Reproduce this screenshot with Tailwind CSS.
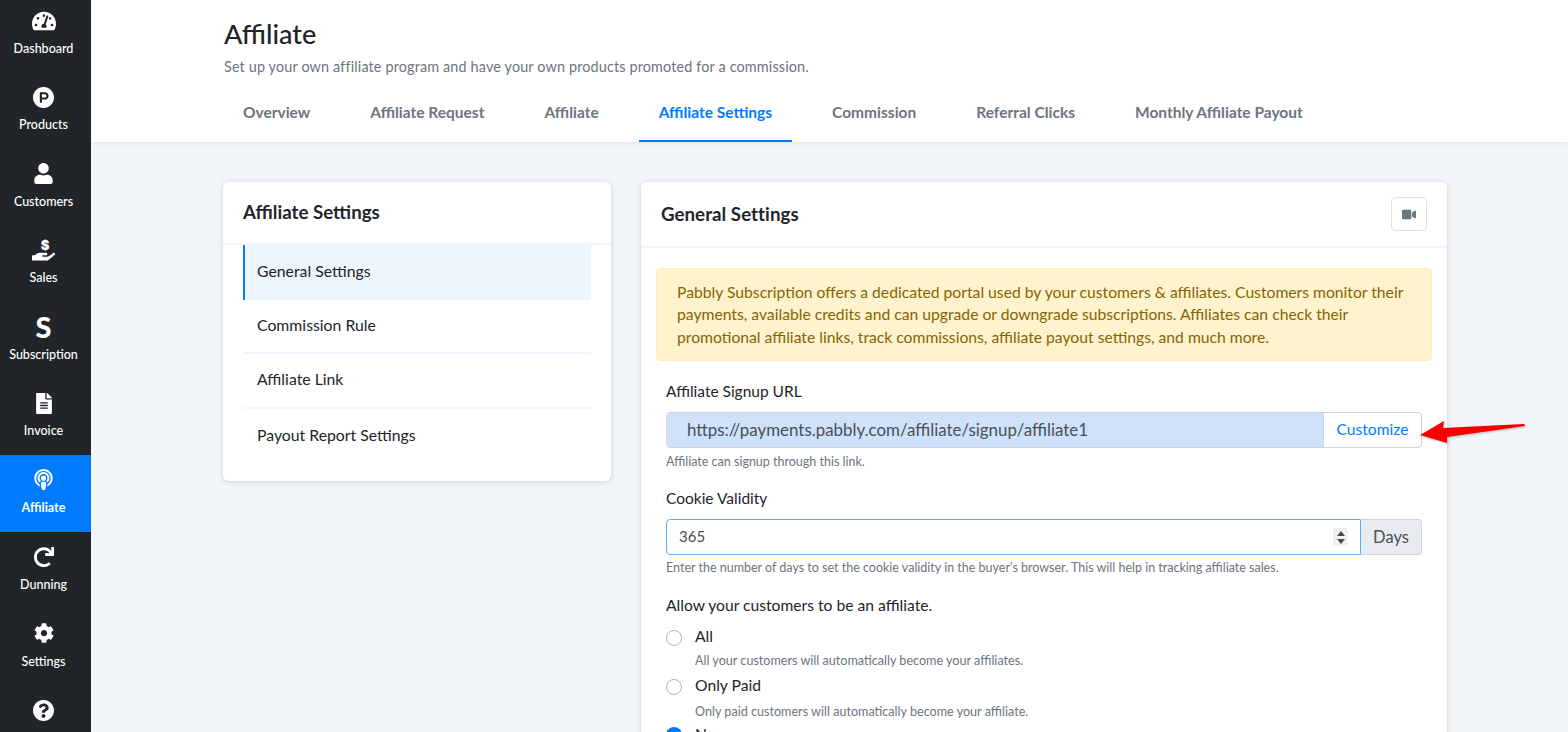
<!DOCTYPE html>
<html lang="en">
<head>
  <meta charset="UTF-8" />
  <meta name="viewport" content="width=device-width, initial-scale=1.0"/>
  <title>Affiliate Settings</title>
  <script src="https://cdn.jsdelivr.net/npm/@tailwindcss/browser@4"></script>
</head>
<body class="bg-[#f2f6f9] text-[#212529] font-['Lato','Open_Sans',sans-serif] h-[732px] w-[1568px] overflow-hidden">
<div class="flex h-[732px] relative overflow-hidden">

  <!-- Sidebar -->
  <aside class="w-[91px] shrink-0 bg-[#212529] text-white text-[12.5px] font-medium overflow-hidden">
    <div class="-mt-[5px] flex flex-col">
      <a class="h-[76.6px] flex flex-col items-center justify-end pb-[13px] pr-[4px] gap-[8px]">
        <svg class="w-[24px] h-[22px] fill-white" viewBox="0 32 576 448"><path d="M288 32C128.94 32 0 160.94 0 320c0 52.8 14.25 102.26 39.06 144.8 5.61 9.62 16.3 15.2 27.44 15.2h443c11.14 0 21.83-5.58 27.44-15.2C561.75 422.26 576 372.8 576 320c0-159.06-128.94-288-288-288zm0 64c14.71 0 26.58 10.13 30.32 23.65-1.11 2.26-2.64 4.23-3.45 6.67l-9.22 27.67c-5.13 3.49-10.97 6.01-17.64 6.01-17.67 0-32-14.33-32-32S270.33 96 288 96zM96 384c-17.67 0-32-14.33-32-32s14.33-32 32-32 32 14.33 32 32-14.33 32-32 32zm48-160c-17.67 0-32-14.33-32-32s14.33-32 32-32 32 14.33 32 32-14.33 32-32 32zm246.77-72.41l-61.33 184C343.13 347.33 352 364.54 352 384c0 11.72-3.38 22.55-8.88 32H232.88c-5.5-9.45-8.88-20.28-8.88-32 0-33.94 26.5-61.43 59.9-63.59l61.34-184.01c4.17-12.56 17.73-19.45 30.36-15.17 12.57 4.19 19.35 17.77 15.17 30.36zm14.66 57.2l15.52-46.55c3.47-1.29 7.13-2.23 11.05-2.23 17.67 0 32 14.33 32 32s-14.33 32-32 32c-11.38-.01-20.89-6.28-26.57-15.22zM480 384c-17.67 0-32-14.33-32-32s14.33-32 32-32 32 14.33 32 32-14.33 32-32 32z"/></svg>
        <span>Dashboard</span>
      </a>
      <a class="h-[76.6px] flex flex-col items-center justify-end pb-[13px] pr-[4px] gap-[8px]">
        <svg class="w-[21px] h-[21px] fill-white" viewBox="8 8 496 496"><path d="M326.3 218.8c0 20.5-16.7 37.2-37.2 37.2h-70.3v-74.4h70.3c20.5 0 37.2 16.7 37.2 37.2zM504 256c0 137-111 248-248 248S8 393 8 256 119 8 256 8s248 111 248 248zm-128.1-37.2c0-47.9-38.9-86.8-86.8-86.8H169.2v248h49.6v-74.4h70.3c47.9 0 86.8-38.9 86.8-86.8z"/></svg>
        <span>Products</span>
      </a>
      <a class="h-[76.6px] flex flex-col items-center justify-end pb-[13px] pr-[4px] gap-[9px]">
        <svg class="w-[19px] h-[21px] fill-white" viewBox="0 0 448 512"><path d="M224 256c70.7 0 128-57.3 128-128S294.7 0 224 0 96 57.3 96 128s57.3 128 128 128zm89.6 32h-16.7c-22.2 10.2-46.9 16-72.9 16s-50.6-5.8-72.9-16h-16.7C60.2 288 0 348.2 0 422.4V464c0 26.5 21.5 48 48 48h352c26.5 0 48-21.5 48-48v-41.6c0-74.2-60.2-134.4-134.4-134.4z"/></svg>
        <span>Customers</span>
      </a>
      <a class="h-[76.6px] flex flex-col items-center justify-end pb-[14px] pr-[4px] gap-[6px]">
        <span class="flex flex-col items-center h-[24px]">
          <span class="text-[13px] leading-[13px] font-black font-['Inter',sans-serif] pl-[3px]">$</span>
          <svg class="w-[23px] h-[10px] fill-white -mt-[1px]" viewBox="0 288 576 224"><path d="M565.3 328.1c-11.8-10.7-30.2-10-42.6 0L430.3 402c-11.3 9.1-25.4 14-40 14H272c-8.8 0-16-7.2-16-16s7.2-16 16-16h78.3c15.9 0 30.7-10.9 33.3-26.6 3.3-20-12.1-37.4-31.6-37.4H192c-27 0-53.1 9.3-74.1 26.3L71.4 384H16c-8.8 0-16 7.2-16 16v96c0 8.8 7.2 16 16 16h356.8c14.5 0 28.6-4.9 40-14L564 377c15.2-12.1 16.4-35.3 1.3-48.9z"/></svg>
        </span>
        <span>Sales</span>
      </a>
      <a class="h-[76.6px] flex flex-col items-center justify-end pb-[13px] pr-[4px] gap-[6px]">
        <span class="text-[29px] leading-[27px] font-black">S</span>
        <span>Subscription</span>
      </a>
      <a class="h-[76.6px] flex flex-col items-center justify-end pb-[14px] pr-[4px] gap-[8px]">
        <svg class="w-[16px] h-[21px] fill-white" viewBox="0 0 384 512"><path d="M224 136V0H24C10.7 0 0 10.7 0 24v464c0 13.3 10.7 24 24 24h336c13.3 0 24-10.7 24-24V160H248c-13.2 0-24-10.8-24-24zm64 236c0 6.6-5.4 12-12 12H108c-6.6 0-12-5.4-12-12v-8c0-6.6 5.4-12 12-12h168c6.6 0 12 5.4 12 12v8zm0-64c0 6.6-5.4 12-12 12H108c-6.6 0-12-5.4-12-12v-8c0-6.6 5.4-12 12-12h168c6.6 0 12 5.4 12 12v8zm0-72v8c0 6.6-5.4 12-12 12H108c-6.6 0-12-5.4-12-12v-8c0-6.6 5.4-12 12-12h168c6.6 0 12 5.4 12 12zm96-114.1v6.1H256V0h6.1c6.4 0 12.5 2.5 17 7l97.9 98c4.5 4.5 7 10.6 7 16.9z"/></svg>
        <span>Invoice</span>
      </a>
      <a class="h-[77px] flex flex-col items-center justify-end pb-[14px] pr-[4px] gap-[9px] bg-[#007bff]">
        <svg class="w-[19px] h-[21px] fill-white" viewBox="0 0 448 512"><path d="M267.429 488.563C262.286 507.573 242.858 512 224 512c-18.857 0-38.286-4.427-43.428-23.437C172.927 460.134 160 388.898 160 355.75c0-35.156 31.142-43.75 64-43.75s64 8.594 64 43.75c0 32.949-12.871 104.179-20.571 132.813zM156.867 288.554c-18.693-18.308-29.958-44.173-28.784-72.599 2.054-49.724 42.395-89.956 92.124-91.881C274.862 121.958 320 165.807 320 220c0 26.827-11.064 51.116-28.866 68.552-2.675 2.62-2.401 6.986.628 9.187 9.312 6.765 16.46 15.343 21.234 25.363 1.741 3.654 6.497 4.66 9.449 1.891 28.826-27.043 46.553-65.783 45.511-108.565-1.855-76.206-63.595-138.208-139.793-140.369C146.869 73.753 80 139.215 80 220c0 41.361 17.532 78.7 45.55 104.989 2.953 2.771 7.711 1.77 9.453-1.887 4.774-10.021 11.923-18.598 21.235-25.363 3.029-2.2 3.304-6.566.629-9.185zM224 0C100.204 0 0 100.185 0 224c0 89.992 52.602 165.647 125.739 201.408 4.333 2.118 9.267-1.544 8.535-6.31-2.382-15.512-4.342-30.946-5.406-44.339-.146-1.836-1.149-3.486-2.678-4.512-47.4-31.806-78.564-86.016-78.187-147.347.592-96.237 79.29-174.648 175.529-174.899C320.793 47.747 400 126.797 400 224c0 61.932-32.158 116.49-80.65 147.867-.999 14.037-3.069 30.588-5.624 47.23-.732 4.767 4.203 8.429 8.535 6.31C395.227 389.727 448 314.187 448 224 448 100.205 347.815 0 224 0zm0 160c-35.346 0-64 28.654-64 64s28.654 64 64 64 64-28.654 64-64-28.654-64-64-64z"/></svg>
        <span class="font-bold">Affiliate</span>
      </a>
      <a class="h-[76.6px] flex flex-col items-center justify-end pb-[13px] pr-[4px] gap-[9px]">
        <svg class="w-[20px] h-[20px] fill-white" viewBox="8 0 504 504"><path d="M500.33 0h-47.41a12 12 0 0 0-12 12.57l4 82.76A247.42 247.42 0 0 0 256 8C119.34 8 7.9 119.53 8 256.19 8.1 393.07 119.1 504 256 504a247.1 247.1 0 0 0 166.18-63.91 12 12 0 0 0 .48-17.43l-34-34a12 12 0 0 0-16.38-.55A176 176 0 1 1 402.1 157.8l-101.53-4.87a12 12 0 0 0-12.57 12v47.41a12 12 0 0 0 12 12h200.33a12 12 0 0 0 12-12V12a12 12 0 0 0-12-12z"/></svg>
        <span>Dunning</span>
      </a>
      <a class="h-[76.6px] flex flex-col items-center justify-end pb-[13px] pr-[4px] gap-[10px]">
        <svg class="w-[20px] h-[20px] fill-white" viewBox="0 0 512 512"><path d="M487.4 315.7l-42.6-24.6c4.3-23.2 4.3-47 0-70.2l42.6-24.6c4.9-2.8 7.1-8.6 5.5-14-11.1-35.6-30-67.8-54.7-94.6-3.8-4.1-10-5.1-14.8-2.3L380.8 110c-17.9-15.4-38.5-27.3-60.8-35.1V25.8c0-5.6-3.9-10.5-9.4-11.7-36.7-8.2-74.3-7.8-109.2 0-5.5 1.2-9.4 6.1-9.4 11.7V75c-22.2 7.9-42.8 19.8-60.8 35.1L88.7 85.5c-4.9-2.8-11-1.9-14.8 2.3-24.7 26.7-43.6 58.9-54.7 94.6-1.7 5.4.6 11.2 5.5 14L67.3 221c-4.3 23.2-4.3 47 0 70.2l-42.6 24.6c-4.9 2.8-7.1 8.6-5.5 14 11.1 35.6 30 67.8 54.7 94.6 3.8 4.1 10 5.1 14.8 2.3l42.6-24.6c17.9 15.4 38.5 27.3 60.8 35.1v49.2c0 5.6 3.9 10.5 9.4 11.7 36.7 8.2 74.3 7.8 109.2 0 5.5-1.2 9.4-6.1 9.4-11.7v-49.2c22.2-7.9 42.8-19.8 60.8-35.1l42.6 24.6c4.9 2.8 11 1.9 14.8-2.3 24.7-26.7 43.6-58.9 54.7-94.6 1.5-5.5-.7-11.3-5.6-14.1zM256 336c-44.1 0-80-35.9-80-80s35.9-80 80-80 80 35.9 80 80-35.9 80-80 80z"/></svg>
        <span>Settings</span>
      </a>
      <a class="h-[76.6px] flex flex-col items-center pt-[15px] pr-[4px]">
        <svg class="w-[21px] h-[21px] fill-white" viewBox="8 8 496 496"><path d="M504 256c0 136.997-111.043 248-248 248S8 392.997 8 256C8 119.083 119.043 8 256 8s248 111.083 248 248zM262.655 90c-54.497 0-89.255 22.957-116.549 63.758-3.536 5.286-2.353 12.415 2.715 16.258l34.699 26.31c5.205 3.947 12.621 3.008 16.665-2.122 17.864-22.658 30.113-35.797 57.303-35.797 20.429 0 45.698 13.148 45.698 32.958 0 14.976-12.363 22.667-32.534 33.976C247.128 238.528 216 254.941 216 296v4c0 6.627 5.373 12 12 12h56c6.627 0 12-5.373 12-12v-1.333c0-28.462 83.186-29.647 83.186-106.667 0-58.002-60.165-102-116.531-102zM256 338c-25.365 0-46 20.635-46 46 0 25.364 20.635 46 46 46s46-20.636 46-46c0-25.365-20.635-46-46-46z"/></svg>
      </a>
    </div>
  </aside>

  <!-- Main -->
  <main class="flex-1 min-w-0">
    <!-- Page header -->
    <header class="bg-white h-[142px] shadow-[0_1px_4px_rgba(0,0,0,0.08)] pl-[133px] pt-[18px]">
      <h1 class="text-[27px] leading-[32px] font-medium">Affiliate</h1>
      <p class="text-[14.4px] leading-[20px] mt-[7px] tracking-[0.15px] text-[#6c757d]">Set up your own affiliate program and have your own products promoted for a commission.</p>
      <nav class="flex gap-5 mt-[9px] -ml-px text-[15.5px] font-bold text-[#6c757d]">
        <a class="h-[56px] px-5 flex items-center border-b-2 border-transparent">Overview</a>
        <a class="h-[56px] px-5 flex items-center border-b-2 border-transparent">Affiliate Request</a>
        <a class="h-[56px] px-5 flex items-center border-b-2 border-transparent">Affiliate</a>
        <a class="h-[56px] px-5 flex items-center border-b-2 text-[#007bff] border-[#007bff]">Affiliate Settings</a>
        <a class="h-[56px] px-5 flex items-center border-b-2 border-transparent">Commission</a>
        <a class="h-[56px] px-5 flex items-center border-b-2 border-transparent">Referral Clicks</a>
        <a class="h-[56px] px-5 flex items-center border-b-2 border-transparent">Monthly Affiliate Payout</a>
      </nav>
    </header>

    <!-- Content -->
    <div class="flex items-start gap-[30px] pl-[132px] pt-[40px]">
      <!-- Left menu card -->
      <section class="w-[388px] h-[299px] shrink-0 bg-white rounded-md shadow-[0_1px_6px_rgba(0,0,0,0.15)]">
        <h2 class="h-[63px] border-b-2 border-[#eff6fd] px-5 flex items-center text-[18.7px] font-bold">Affiliate Settings</h2>
        <ul class="mx-5 text-[15.8px]">
          <li class="h-[55px] flex items-center pl-[12px] pb-[4px] bg-[#edf5fd] border-l-2 border-[#007bff]">General Settings</li>
          <li class="h-[54px] flex items-center pl-[14px] pb-[2px] border-b-2 border-[#eff6fd]">Commission Rule</li>
          <li class="h-[55px] flex items-center pl-[14px] pb-[3px] border-b-2 border-[#eff6fd]">Affiliate Link</li>
          <li class="h-[54px] flex items-center pl-[14px] pb-[3px]">Payout Report Settings</li>
        </ul>
      </section>

      <!-- General settings card -->
      <section class="w-[806px] shrink-0 bg-white rounded-md shadow-[0_1px_6px_rgba(0,0,0,0.15)]">
        <div class="h-[66px] border-b-2 border-[#eff6fd] pl-5 pr-5 flex items-center justify-between">
          <h2 class="text-[18.7px] font-bold tracking-[0.05px]">General Settings</h2>
          <button class="w-[36px] h-[34px] border border-[#dcdfe6] rounded flex items-center justify-center">
            <svg class="w-[14px] h-[13px] fill-[#6c757d]" viewBox="0 0 576 512"><path d="M336.2 64H47.8C21.4 64 0 85.4 0 111.8v288.4C0 426.6 21.4 448 47.8 448h288.4c26.4 0 47.8-21.4 47.8-47.8V111.8c0-26.4-21.4-47.8-47.8-47.8zm189.4 37.7L416 177.3v157.4l109.6 75.5c21.2 14.6 50.4-.3 50.4-25.8V127.5c0-25.4-29.1-40.4-50.4-25.8z"/></svg>
          </button>
        </div>
        <div class="px-[15px] pt-5">
          <div class="h-[93px] bg-[#fff3cd] border border-[#ffeeba] rounded pl-5 pr-[24px] pt-[12px] text-[15.7px] leading-[22.4px] text-[#856404]">
            Pabbly Subscription offers a dedicated portal used by your customers &amp; affiliates. Customers monitor their payments, available credits and can upgrade or downgrade subscriptions. Affiliates can check their promotional affiliate links, track commissions, affiliate payout settings, and much more.
          </div>
          <div class="px-[10px]">
            <label class="block text-[15.5px] leading-[20px] mt-[20px]">Affiliate Signup URL</label>
            <div class="flex h-[36px] mt-[11px] border border-[#ced4da] rounded">
              <div class="flex-1 bg-[#d0e1fc] rounded-l flex items-center pl-5 text-[16.9px] text-[#495057]">https://payments.pabbly.com/affiliate/signup/affiliate1</div>
              <div class="w-[98px] border-l border-[#ced4da] flex items-center justify-center text-[15.6px] text-[#007bff]">Customize</div>
            </div>
            <p class="text-[12.5px] leading-[16px] mt-[6px] text-[#6c757d]">Affiliate can signup through this link.</p>

            <label class="block text-[15.5px] leading-[20px] mt-[18px]">Cookie Validity</label>
            <div class="flex h-[36px] mt-[11px]">
              <div class="flex-1 border border-[#5cb0f6] rounded-l flex items-center pl-3 pr-[12px] pb-[2px] text-[15px] text-[#495057]">
                <span class="flex-1">365</span>
                <span class="w-[15px] h-[18px] mt-[2px] bg-[#f0f0f0] flex flex-col items-center justify-center gap-[3px]">
                  <span class="w-0 h-0 border-x-[4px] border-x-transparent border-b-[5px] border-b-[#4a4a4a]"></span>
                  <span class="w-0 h-0 border-x-[4px] border-x-transparent border-t-[5px] border-t-[#4a4a4a]"></span>
                </span>
              </div>
              <div class="w-[61px] bg-[#e9ecef] border border-l-0 border-[#ced4da] rounded-r flex items-center justify-center text-[16.5px] text-[#495057]">Days</div>
            </div>
            <p class="text-[12.5px] leading-[16px] mt-[5px] text-[#6c757d]">Enter the number of days to set the cookie validity in the buyer's browser. This will help in tracking affiliate sales.</p>

            <p class="text-[15.65px] leading-[20px] mt-[19px]">Allow your customers to be an affiliate.</p>
            <div class="flex gap-[13px] mt-[12px] items-center h-[20px]">
              <span class="w-[16px] h-[16px] rounded-full border border-[#adb5bd] bg-white mt-[1px]"></span>
              <span class="text-[15.7px]">All</span>
            </div>
            <p class="text-[12.6px] leading-[16px] mt-[6px] pl-[29px] text-[#6c757d]">All your customers will automatically become your affiliates.</p>
            <div class="flex gap-[13px] mt-[7px] items-center h-[20px]">
              <span class="w-[16px] h-[16px] rounded-full border border-[#adb5bd] bg-white mt-[2px]"></span>
              <span class="text-[15.7px]">Only Paid</span>
            </div>
            <p class="text-[12.6px] leading-[16px] mt-[8px] pl-[29px] text-[#6c757d]">Only paid customers will automatically become your affiliate.</p>
            <div class="flex gap-[13px] mt-[5px] items-center h-[20px]">
              <span class="w-[16px] h-[16px] rounded-full bg-[#007bff] flex items-center justify-center"><span class="w-[6px] h-[6px] rounded-full bg-white"></span></span>
              <span class="text-[15.7px]">None</span>
            </div>
          </div>
        </div>
      </section>
    </div>
  </main>

  <!-- Red arrow annotation -->
  <svg class="absolute left-[1415px] top-[415px] w-[115px] h-[35px] fill-[#f60000] drop-shadow-[1px_1px_1px_rgba(0,0,0,0.25)]" viewBox="0 0 115 35"><polygon points="5,20 29,6 28,13 109,9 110,11 32,22 32,28"/></svg>
</div>
</body>
</html>
